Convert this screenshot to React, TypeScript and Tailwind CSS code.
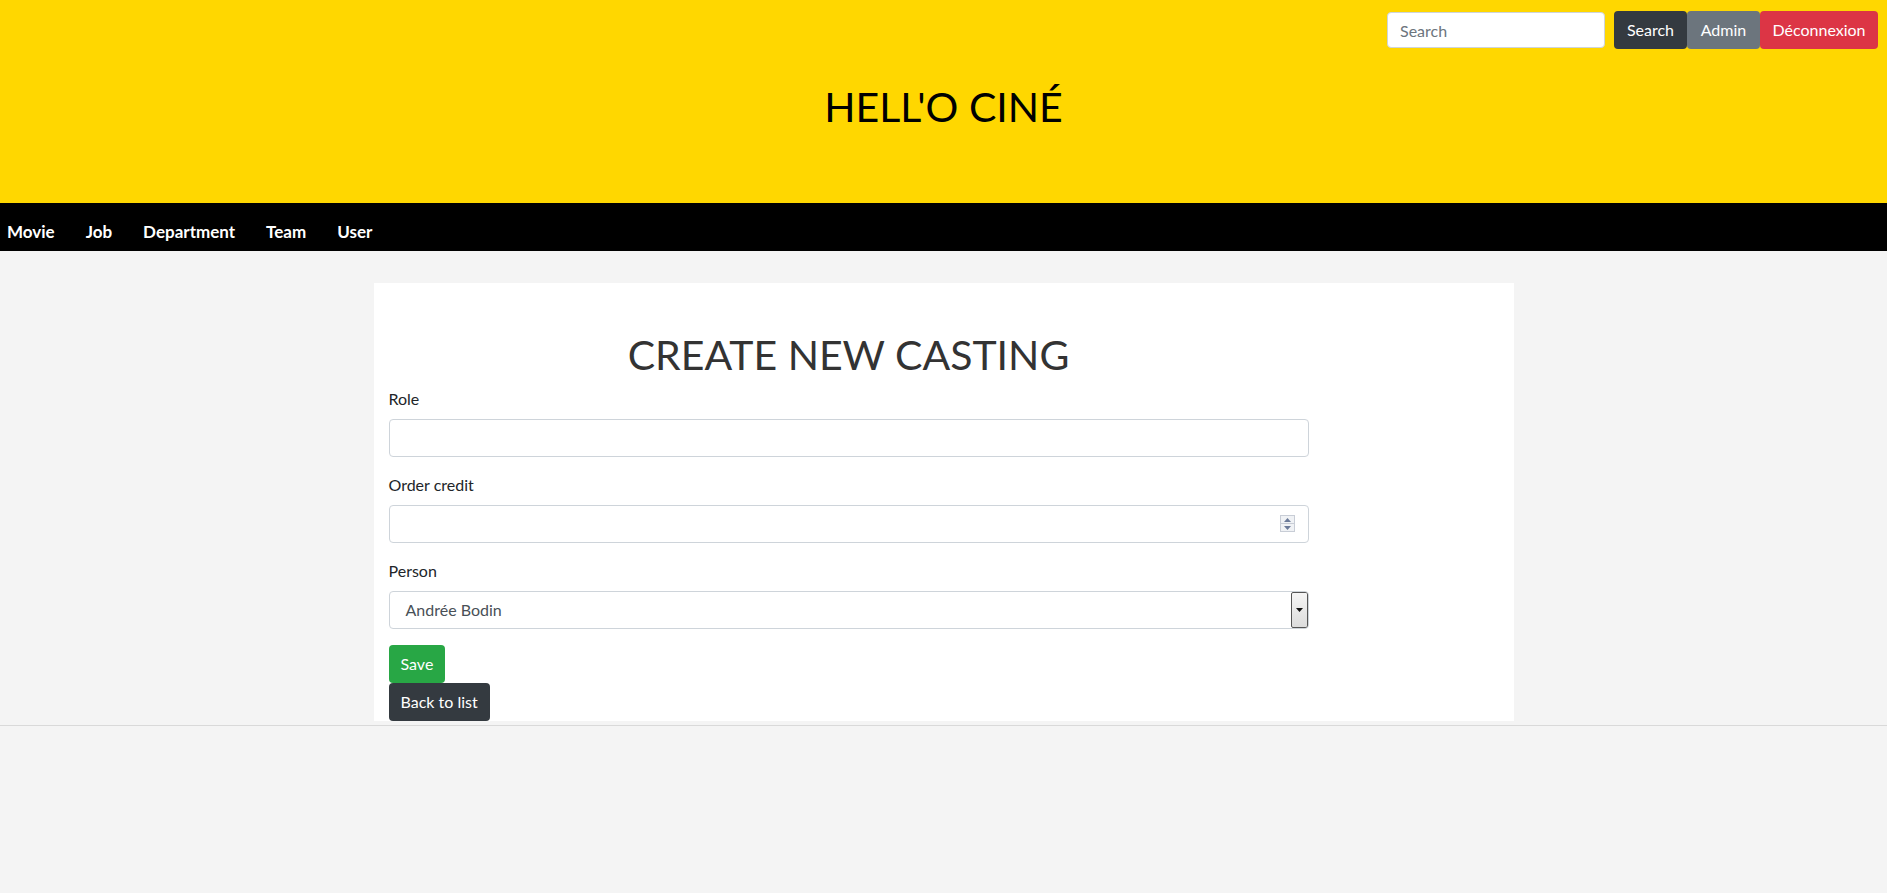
import { memo } from "react";
import type { FC } from "react";

const navItems = ["Movie", "Job", "Department", "Team", "User"];

const Field: FC<{ label: string; children: React.ReactNode }> = ({ label, children }) => (
  <div className="mb-4">
    <label className="block mb-2 text-[16px] leading-6 text-[#212529]">{label}</label>
    {children}
  </div>
);

const App: FC = () => {
  return (
    <div className="min-h-screen bg-[#f4f4f4] font-['Lato','Noto_Sans',sans-serif] text-[#212529]">
      <header className="h-[203px] bg-[#ffd700]">
        <div className="flex justify-end items-center pt-[11px] pr-[9px]">
          <input
            className="w-[218px] h-[36px] mr-[9px] rounded-[4px] bg-white border border-[#ced4da] px-3 text-[16px] placeholder:text-[#6c757d] outline-none"
            placeholder="Search"
          />
          <button className="h-[38px] w-[73px] rounded-[4px] bg-[#343a40] text-white text-[16px]">Search</button>
          <button className="h-[38px] w-[73px] rounded-[4px] bg-[#6c757d] text-white text-[16px]">Admin</button>
          <button className="h-[38px] w-[118px] rounded-[4px] bg-[#dc3545] text-white text-[16px]">Déconnexion</button>
        </div>
        <h1 className="mt-[34px] text-center text-[41px] leading-[48px] text-black">HELL'O CINÉ</h1>
      </header>

      <nav className="h-[48px] bg-black flex items-center pt-[10px] pl-[7px] gap-[31px]">
        {navItems.map((item) => (
          <a key={item} className="text-white font-bold text-[17px] leading-[38px] cursor-pointer">
            {item}
          </a>
        ))}
      </nav>

      <main className="pt-[32px]">
        <div className="w-[1140px] mx-auto bg-white px-[15px] pt-[48px]">
          <div className="w-[920px]">
            <h1 className="text-center text-[41px] leading-[48px] mb-2 text-[#333]">CREATE NEW CASTING</h1>

            <Field label="Role">
              <input className="block w-full h-[38px] rounded-[4px] border border-[#ced4da] px-3 outline-none" />
            </Field>

            <Field label="Order credit">
              <div className="relative">
                <input className="block w-full h-[38px] rounded-[4px] border border-[#ced4da] px-3 outline-none" />
                <div className="absolute right-[14px] top-[10px] w-[15px] h-[17px] flex flex-col border border-[#c8cdd6] bg-[#f0f2f5]">
                  <div className="flex-1 flex items-center justify-center border-b border-[#c8cdd6]">
                    <svg width="7" height="4" viewBox="0 0 7 4"><path d="M0 4 L3.5 0 L7 4 Z" fill="#6b7a99" /></svg>
                  </div>
                  <div className="flex-1 flex items-center justify-center">
                    <svg width="7" height="4" viewBox="0 0 7 4"><path d="M0 0 L3.5 4 L7 0 Z" fill="#6b7a99" /></svg>
                  </div>
                </div>
              </div>
            </Field>

            <Field label="Person">
              <div className="flex w-full h-[38px] rounded-[4px] border border-[#ced4da] overflow-hidden">
                <div className="flex-1 flex items-center pl-[16px] text-[16px] text-[#495057]">Andrée Bodin</div>
                <div className="w-[17px] flex items-center justify-center border border-[#555] bg-gradient-to-b from-[#f5f5f5] to-[#dcdcdc] rounded-[2px]">
                  <svg width="7" height="4" viewBox="0 0 7 4"><path d="M0 0 L3.5 4 L7 0 Z" fill="#111" /></svg>
                </div>
              </div>
            </Field>

            <button className="block h-[38px] px-3 rounded-[4px] bg-[#28a745] text-white text-[16px]">Save</button>
            <button className="block h-[38px] px-3 rounded-[4px] bg-[#343a40] text-white text-[16px]">Back to list</button>
          </div>
        </div>
        <div className="mt-[4px] border-t border-[#d9d9d9]" />
      </main>
    </div>
  );
};

export default memo(App);
